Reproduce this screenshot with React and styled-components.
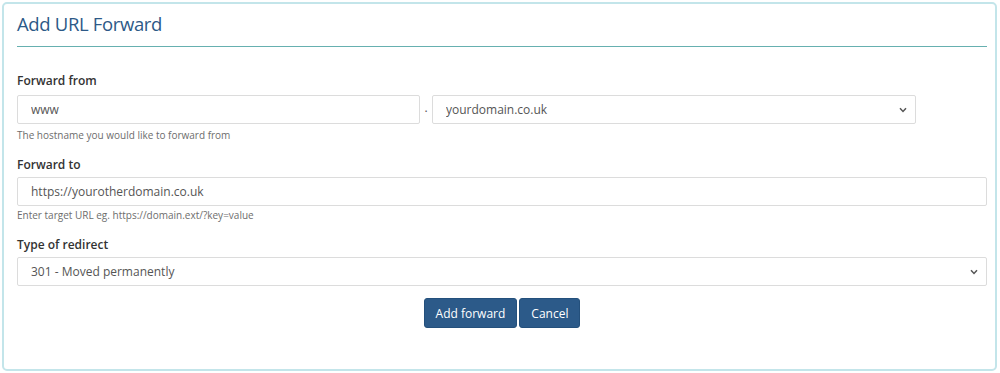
import React from "react";
import styled, { createGlobalStyle } from "styled-components";

const Global = createGlobalStyle`
  html, body { margin: 0; padding: 0; background: #fff; }
  body { font-family: "Open Sans", "Noto Sans", sans-serif; color: #333; }
  * { box-sizing: border-box; }
`;

const Panel = styled.div`
  margin: 2px 3px 2px 2px;
  height: 369px;
  border: 2px solid #c3e5ea;
  border-radius: 5px;
  padding: 7px 8px 0 13px;
`;

const Header = styled.div`
  border-bottom: 1px solid #66b0b0;
  padding-bottom: 9px;
  margin-bottom: 25px;
`;

const Title = styled.h1`
  margin: 0;
  font-size: 18.5px;
  line-height: 26px;
  font-weight: 500;
  letter-spacing: -0.35px;
  color: #2d5987;
`;

const Group = styled.div`
  margin-bottom: ${(p) => (p.$last ? "12px" : "14px")};
`;

const Label = styled.label`
  display: block;
  font-size: 12px;
  line-height: 18px;
  font-weight: 600;
  color: #333;
  margin-bottom: 3px;
`;

const Row = styled.div`
  display: flex;
  align-items: center;
`;

const Input = styled.input`
  display: block;
  width: ${(p) => p.$w || "100%"};
  height: 29px;
  border: 1px solid #dcdcdc;
  border-radius: 2px;
  padding: 0 13px;
  font-family: inherit;
  font-size: 12px;
  color: #555;
  background: #fff;
  outline: none;
`;

const Dot = styled.span`
  width: 12px;
  text-align: center;
  font-size: 12px;
  color: #555;
  line-height: 29px;
  padding-bottom: 4px;
`;

const SelectWrap = styled.div`
  position: relative;
  width: ${(p) => p.$w || "100%"};
`;

const Select = styled.select`
  appearance: none;
  -webkit-appearance: none;
  display: block;
  width: 100%;
  height: 29px;
  border: 1px solid #dcdcdc;
  border-radius: 2px;
  padding: 0 13px;
  font-family: inherit;
  font-size: 12px;
  color: #555;
  background: #fff;
  outline: none;
`;

const Chevron = styled.svg`
  position: absolute;
  right: 9px;
  top: 12px;
  width: 8px;
  height: 6px;
  pointer-events: none;
`;

const Help = styled.div`
  font-size: 10px;
  line-height: 14px;
  color: #6d6d6d;
  margin-top: 2px;
`;

const Actions = styled.div`
  display: flex;
  justify-content: center;
  gap: 2px;
`;

const Button = styled.button`
  height: 30px;
  padding: 0 11px;
  border: 1px solid #24507c;
  border-radius: 3px;
  background: #2c5a89;
  color: #fff;
  font-family: inherit;
  font-size: 12px;
  cursor: pointer;
`;

const ChevronIcon = () => (
  <Chevron viewBox="0 0 8 6">
    <path d="M1 1.2 L4 4.4 L7 1.2" fill="none" stroke="#555" strokeWidth="1.5" />
  </Chevron>
);

export default function App() {
  return (
    <>
      <Global />
      <Panel>
        <Header>
          <Title>Add URL Forward</Title>
        </Header>
        <Group>
          <Label>Forward from</Label>
          <Row>
            <Input $w="403px" defaultValue="www" />
            <Dot>.</Dot>
            <SelectWrap $w="484px">
              <Select defaultValue="yourdomain.co.uk">
                <option>yourdomain.co.uk</option>
              </Select>
              <ChevronIcon />
            </SelectWrap>
          </Row>
          <Help>The hostname you would like to forward from</Help>
        </Group>
        <Group>
          <Label>Forward to</Label>
          <Input defaultValue="https://yourotherdomain.co.uk" />
          <Help>Enter target URL eg. https://domain.ext/?key=value</Help>
        </Group>
        <Group $last>
          <Label>Type of redirect</Label>
          <SelectWrap>
            <Select defaultValue="301">
              <option value="301">301 - Moved permanently</option>
            </Select>
            <ChevronIcon />
          </SelectWrap>
        </Group>
        <Actions>
          <Button>Add forward</Button>
          <Button>Cancel</Button>
        </Actions>
      </Panel>
    </>
  );
}
